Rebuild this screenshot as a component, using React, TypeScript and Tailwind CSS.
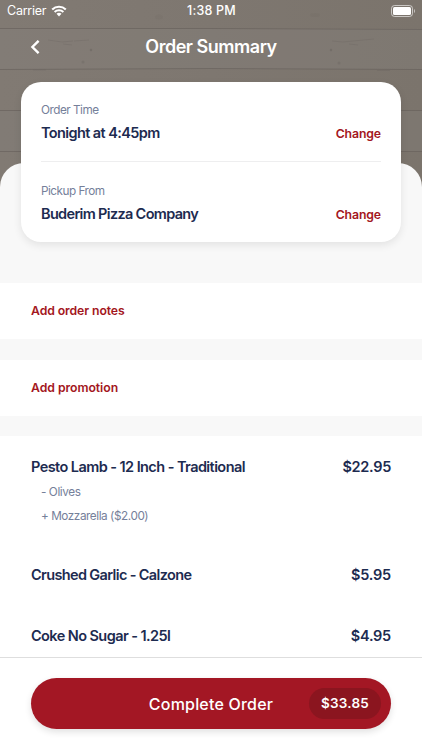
interface OrderItem {
    name: string;
    price: string;
    nameClass: string;
    priceClass: string;
    extras: { label: string; className: string }[];
}

const orderDetails = [
    { label: 'Order Time', value: 'Tonight at 4:45pm', labelClass: 'tracking-[-0.5px]', valueClass: 'tracking-[-0.6px]' },
    { label: 'Pickup From', value: 'Buderim Pizza Company', labelClass: 'tracking-[-0.5px]', valueClass: 'tracking-[-0.67px]' },
];

const items: OrderItem[] = [
    {
        name: 'Pesto Lamb - 12 Inch - Traditional',
        price: '$22.95',
        nameClass: 'tracking-[-0.57px]',
        priceClass: 'tracking-[-0.3px]',
        extras: [
            { label: '- Olives', className: 'tracking-[-0.42px]' },
            { label: '+ Mozzarella ($2.00)', className: 'tracking-[-0.44px]' },
        ],
    },
    { name: 'Crushed Garlic - Calzone', price: '$5.95', nameClass: 'tracking-[-0.64px]', priceClass: 'tracking-[-0.2px]', extras: [] },
    { name: 'Coke No Sugar - 1.25l', price: '$4.95', nameClass: 'tracking-[-0.58px]', priceClass: 'tracking-[-0.25px]', extras: [] },
];

function WoodTexture() {
    return (
        <svg className="absolute inset-0 h-full w-full" viewBox="0 0 422 200" fill="none">
            <defs>
                <linearGradient id="plank" x1="0" y1="0" x2="422" y2="0" gradientUnits="userSpaceOnUse">
                    <stop stopColor="#817a73" />
                    <stop offset="0.5" stopColor="#7e7770" />
                    <stop offset="1" stopColor="#7b746c" />
                </linearGradient>
            </defs>
            <rect width="422" height="200" fill="url(#plank)" />
            <rect y="29" width="422" height="40" fill="#85807a" fillOpacity="0.4" />
            <rect y="111" width="422" height="40" fill="#85807a" fillOpacity="0.25" />
            <g stroke="#67615c" strokeOpacity="0.65">
                <path d="M0 28.5H211L422 29.5" />
                <path d="M0 69.5L211 68.5L422 69.5" />
                <path d="M0 110.5H422" />
                <path d="M0 151.5H422" />
            </g>
            {/* Grain and knots */}
            <g stroke="#67615c" strokeOpacity="0.28">
                <path d="M48 40L62 42L73 41M63 44L72 45M74 41L89 40" />
                <path d="M332 41L343 42L353 41L374 39M349 44L358 45M33 70H46M377 70.5H390" />
            </g>
            <g fill="#67615c" fillOpacity="0.45">
                <circle cx="91" cy="50" r="1.2" />
                <circle cx="83" cy="62" r="1.5" fillOpacity="0.3" />
                <circle cx="331" cy="50" r="1.2" />
                <circle cx="339" cy="63" r="1.5" fillOpacity="0.3" />
                <ellipse cx="159" cy="17" rx="4" ry="2.5" fillOpacity="0.12" />
                <ellipse cx="315" cy="15" rx="5" ry="2" fillOpacity="0.12" />
            </g>
        </svg>
    );
}

function StatusBar() {
    return (
        <div className="relative grid h-[22px] grid-cols-3 items-center pl-[7px] pr-[6px] text-white">
            <div className="flex items-center gap-[5px]">
                <span className="text-[12.5px] leading-4 tracking-[-0.25px]">Carrier</span>
                <svg width="16" height="12" viewBox="0 0 16 12" fill="none">
                    <path d="M1.2 4.4C5 .8 11 .8 14.8 4.4" stroke="white" strokeWidth="2.1" />
                    <path d="M3.6 7C6.1 4.7 9.9 4.7 12.4 7" stroke="white" strokeWidth="2" />
                    <path d="M5.5 8.8C6.9 7.5 9.1 7.5 10.5 8.8L8 11.4Z" fill="white" />
                </svg>
            </div>
            <span className="text-center text-[12.5px] font-medium leading-4 tracking-[0.2px]">1:38 PM</span>
            <svg className="justify-self-end" width="25" height="12" viewBox="0 0 25 12" fill="none">
                <rect x="0.5" y="0.5" width="21" height="11" rx="3" stroke="white" strokeOpacity="0.6" />
                <rect x="2" y="2" width="18" height="8" rx="1.5" fill="white" />
                <path d="M23 4C24.3 4.5 24.3 7.5 23 8Z" fill="white" fillOpacity="0.6" />
            </svg>
        </div>
    );
}

export default function App() {
    return (
        <div className="flex h-[750px] w-[422px] flex-col overflow-hidden bg-[#f8f8f8] font-['Inter',sans-serif] text-[#1d2b50]">
            {/* Header */}
            <header className="relative h-[200px] shrink-0">
                <WoodTexture />
                <StatusBar />
                <div className="relative grid h-[50px] grid-cols-[60px_1fr_60px] items-center text-white">
                    <button className="pl-[30px]" aria-label="Back">
                        <svg width="10" height="14" viewBox="0 0 10 14" fill="none">
                            <path d="M8.6 0.8L2.4 7L8.6 13.2" stroke="white" strokeWidth="2.4" />
                        </svg>
                    </button>
                    <h1 className="text-center text-[18px] font-semibold leading-6 tracking-[-0.48px]">Order Summary</h1>
                </div>
            </header>

            {/* Order details */}
            <section className="relative -mt-[37px] h-[120px] shrink-0 rounded-t-[24px] bg-[#f8f8f8] px-[21px]">
                <div className="-mt-[81px] h-40 rounded-[20px] bg-white px-5 shadow-[0_3px_8px_rgba(0,0,0,0.09)]">
                    {orderDetails.map((detail, index) => (
                        <div
                            key={detail.label}
                            className={index === 0 ? 'h-20 border-b border-[#eeeeef] pt-5' : 'h-20 pt-[21px]'}
                        >
                            <p className={`text-[11.75px] leading-4 text-[#75809a] ${detail.labelClass}`}>{detail.label}</p>
                            <div className="mt-[5px] flex items-center justify-between">
                                <p className={`text-[14.5px] font-semibold leading-5 ${detail.valueClass}`}>{detail.value}</p>
                                <button className="pt-px text-[12.25px] font-semibold leading-[19px] tracking-[-0.1px] text-[#a31621]">
                                    Change
                                </button>
                            </div>
                        </div>
                    ))}
                </div>
            </section>

            {/* Notes and promotion */}
            <div className="flex shrink-0 flex-col gap-[21px] pb-5 text-[12.25px] font-semibold text-[#a31621]">
                <button className="h-14 bg-white pl-[31px] pt-px text-left tracking-[-0.1px]">Add order notes</button>
                <button className="h-14 bg-white pl-[31px] pt-px text-left tracking-[-0.05px]">Add promotion</button>
            </div>

            {/* Items */}
            <main className="flex min-h-0 flex-1 flex-col gap-[41px] overflow-hidden bg-white px-[31px] pt-[21px]">
                {items.map((item) => (
                    <div key={item.name} className="shrink-0">
                        <div className="flex justify-between text-[14.5px] font-semibold leading-5">
                            <span className={item.nameClass}>{item.name}</span>
                            <span className={item.priceClass}>{item.price}</span>
                        </div>
                        {item.extras.length > 0 && (
                            <ul className="-mb-1 mt-[3px] pl-[10px] text-[11.75px] leading-6 text-[#75809a]">
                                {item.extras.map((extra) => (
                                    <li key={extra.label} className={extra.className}>{extra.label}</li>
                                ))}
                            </ul>
                        )}
                    </div>
                ))}
            </main>

            {/* Checkout */}
            <footer className="h-[93px] shrink-0 border-t border-[#dedede] bg-white px-[31px] pt-5">
                <button className="grid h-[51px] w-full grid-cols-[1fr_auto_1fr] items-center rounded-full bg-[#a31724] px-[10px] text-white shadow-[0_3px_7px_rgba(0,0,0,0.12)]">
                    <span className="col-start-2 text-[16px] font-medium tracking-[0.2px]">Complete Order</span>
                    <span className="flex h-[31px] w-[72px] items-center justify-center justify-self-end rounded-full bg-[#8b151f] text-[13.5px] font-semibold tracking-[0.2px]">
                        $33.85
                    </span>
                </button>
            </footer>
        </div>
    );
}
